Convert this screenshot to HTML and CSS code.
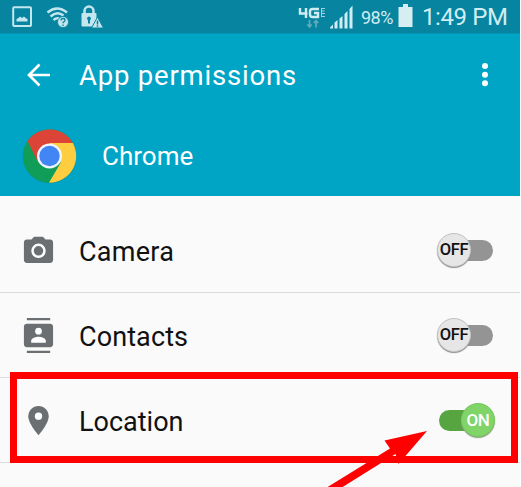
FILE: index.html
```html
<!DOCTYPE html>
<html lang="en">
<head>
<meta charset="utf-8">
<title>App permissions</title>
<link rel="stylesheet" href="styles.css">
</head>
<body>
<main class="screen">
  <div class="status">
    <svg class="status-left" width="110" height="33" viewBox="0 0 110 33" fill="none">
      <rect x="13.2" y="7.2" width="17.8" height="18.8" rx="1" stroke="#c4e6ee" stroke-width="2"/>
      <path d="M16.500 21.500v-2.500l2-1 1.500-1.500 2 1.500 2-1.500 1.500 1.500 2 1v2.500z" fill="#c4e6ee"/>
      <g stroke="#c4e6ee" stroke-width="2.500">
        <path d="M47.500 12.500Q57 4.500 67 12.500M50.500 16.500Q57 10.500 63.500 15.500M53.500 20Q56.500 17.500 59 18.500"/>
      </g>
      <circle cx="63" cy="22" r="5.500" fill="#c4e6ee" stroke="#0784a0" stroke-width=".8"/>
      <path d="M61 20.500q0-2 2-2t2 1.800q0 1-1.200 1.500-.8.500-.8 1.500M63 24.500v1.500" stroke="#0784a0" stroke-width="1.300"/>
      <path d="M84.500 14v-3a4.500 4.500 0 0 1 9 0v3" stroke="#c4e6ee" stroke-width="2.500"/>
      <rect x="81.500" y="13" width="15" height="13.500" rx="1" fill="#c4e6ee"/>
      <path d="M89 16.500a2 2 0 0 1 1 3.700V23.500h-2v-3.300a2 2 0 0 1 1-3.700z" fill="#0784a0"/>
      <path d="M97.500 17l6 11H91.500z" fill="#c4e6ee" stroke="#0784a0" stroke-width="1"/>
      <path d="M97.500 20.500v4M97.500 25.300v1.400" stroke="#0784a0" stroke-width="1.500"/>
    </svg>
    <div class="status-right">
      <svg width="56" height="33" viewBox="298 0 56 33" fill="none">
        <path d="M300 8v5.500h7.500M306 8v10M319 9h-6.500q-2.500 0-2.500 2.500v3q0 2.500 2.500 2.500h5.500v-4h-4" stroke="#d0edf3" stroke-width="2.400"/>
        <path d="M321 8.500h4M321 11h3.500M321 13.500h4M321 16.500h4M321.500 8v9" stroke="#a0d0dd" stroke-width="1"/>
        <path d="M309.500 20v7M307.300 24.500l2.200 2.500 2.200-2.500M316 27.500v-7M313.800 23l2.200-2.500 2.200 2.500" stroke="#62acb9" stroke-width="1.700"/>
        <path d="M330 28.500v-1l3-3v4zM334.500 28.500v-6l3-2.500v8.500zM339.500 28.500v-10l3-2.500v12.500zM344.500 28.500V14l3-3v17.500zM349.500 28.500V9l3-3.500v23z" fill="#d0edf3"/>
      </svg>
      <span class="percent">98%</span>
      <svg class="battery" width="15" height="23" viewBox="0 0 15 23"><path d="M.5 3H5V0h5v3h4.500v20H.5z" fill="#d6eef2"/></svg>
      <span class="time">1:49 PM</span>
    </div>
  </div>
  <header class="header">
    <div class="toolbar">
      <svg class="back" width="26" height="26" viewBox="0 0 26 26" fill="none" stroke="#fff" stroke-width="2.700"><path d="M25 12H4M14.500 1.500L4 12l10.500 10.500"/></svg>
      <h1 class="title">App permissions</h1>
      <svg class="more" width="8" height="26" viewBox="0 0 8 26" fill="#fff"><circle cx="4" cy="3" r="3"/><circle cx="4" cy="11.700" r="3"/><circle cx="4" cy="20.300" r="3"/></svg>
    </div>
    <div class="app">
      <svg class="logo" width="56" height="56" viewBox="-28.500 -28 56 56">
        <circle cy=".7" r="26.700" fill="#168ba0" opacity=".6"/>
        <circle r="26.700" fill="#109d58"/>
        <path d="M-22-15A26.700 26.700 0 0 1 23.300-13H0L-11.300 6.500z" fill="#dc4437"/>
        <path d="M0-13H23.300A26.700 26.700 0 0 1-.5 26.700L11.300 6.500z" fill="#ffcd40"/>
        <circle r="12.500" fill="#f1f5ff"/><circle r="10.200" fill="#4285f4"/>
      </svg>
      <span class="app-name">Chrome</span>
    </div>
  </header>
  <section class="list">
    <div class="row">
      <svg class="icon" width="35" height="35" viewBox="0 0 24 24"><path d="M9 2.500L7.200 4.500H4c-1.100 0-2 .9-2 2v12c0 1.100.9 2 2 2h16c1.100 0 2-.9 2-2v-12c0-1.100-.9-2-2-2h-3.200L15 2.500z" fill="#6b6f72"/><circle cx="12" cy="12.200" r="4.100" fill="none" stroke="#fff" stroke-width="1.700"/></svg>
      <span class="label camera">Camera</span>
      <div class="switch"><span class="knob">OFF</span></div>
    </div>
    <div class="row">
      <svg class="icon" width="35" height="35" viewBox="0 0 24 24"><path d="M4 0h16v1.600H4zM4 22.400h16V24H4zM4 4h16c1.100 0 2 .9 2 2v12c0 1.100-.9 2-2 2H4c-1.100 0-2-.9-2-2V6c0-1.100.9-2 2-2z" fill="#6b6f72"/><circle cx="12" cy="9" r="2.300" fill="#fff"/><path d="M7 17v-1.500c0-1.700 3.300-2.600 5-2.600s5 .9 5 2.600V17z" fill="#fff"/></svg>
      <span class="label contacts">Contacts</span>
      <div class="switch"><span class="knob">OFF</span></div>
    </div>
    <div class="row">
      <svg class="icon" width="35" height="35" viewBox="0 0 24 24"><path d="M12 2C8.130 2 5 5.130 5 9c0 5.250 7 13 7 13s7-7.750 7-13c0-3.870-3.130-7-7-7z" fill="#6b6f72"/><circle cx="12" cy="9" r="2.500" fill="#fff"/></svg>
      <span class="label location">Location</span>
      <div class="switch on"><span class="knob">ON</span></div>
    </div>
  </section>
  <div class="highlight"></div>
  <svg class="arrow" width="110" height="60" viewBox="320 427 110 60"><path d="M427 431L398.500 464 395.500 454 341 488H326L390 448.500 384.500 440.500z" fill="#fe0000"/></svg>
</main>
</body>
</html>
```
FILE: styles.css
```css
* { box-sizing: border-box; }
body { margin: 0; background: #fff; font-family: Roboto, sans-serif; }
.screen { position: relative; width: 520px; height: 487px; overflow: hidden; background: #fafafa; }
.status { display: flex; justify-content: space-between; height: 34px; background: #0784a0; color: #d0edf3; border-bottom: 1px solid #0494b3; }
.status-right { display: flex; align-items: center; width: 222px; white-space: nowrap; }
.percent { width: 33px; margin-left: 7px; font-size: 18px; line-height: 34px; letter-spacing: -.5px; padding-top: 2px; }
.battery { margin-left: 4px; margin-bottom: 2px; }
.time { margin-left: 9px; font-size: 24px; line-height: 34px; letter-spacing: -.4px; padding-top: 1px; }
.header { height: 162px; background: #00a4c5; color: #fff; }
.toolbar { display: flex; align-items: center; height: 83px; padding: 0 31px 0 25px; }
.title { margin: 0 auto 0 28px; font-size: 27.500px; font-weight: 400; line-height: 36px; letter-spacing: .8px; white-space: nowrap; }
.app { display: flex; align-items: center; height: 78px; padding-left: 21px; }
.app-name { margin-left: 25px; font-size: 26px; }
.list { padding-top: 12px; }
.row { display: flex; align-items: center; height: 85px; padding: 0 25px 0 21px; border-bottom: 1px solid #d9dcdd; }
.label { margin-left: 23px; margin-right: auto; padding-top: 3px; font-size: 27px; color: #111; }
.camera { letter-spacing: .25px; }
.contacts { letter-spacing: .1px; }
.switch { position: relative; display: flex; width: 58px; height: 35px; isolation: isolate; }
.switch::before { content: ""; position: absolute; z-index: -1; top: 7px; left: 10px; width: 46px; height: 21px; border-radius: 11px; background: #949494; }
.knob { display: flex; align-items: center; justify-content: center; width: 34px; height: 34px; border: 1px solid #c4c4c4; border-radius: 50%; background: #e6e6e6; box-shadow: 0 1px 1px #8c8c8c; color: #111; font-size: 16.500px; font-weight: 500; letter-spacing: -.4px; }
.on { justify-content: flex-end; }
.on::before { left: 2px; background: #57a541; }
.on .knob { border-color: #78c75f; background: #80d468; color: #fff; font-size: 17px; box-shadow: 0 1px 1px #899d82; }
.highlight { position: absolute; top: 372px; left: 10px; width: 508px; height: 91px; border: 7px solid #fe0000; }
.arrow { position: absolute; top: 427px; left: 320px; }
```
